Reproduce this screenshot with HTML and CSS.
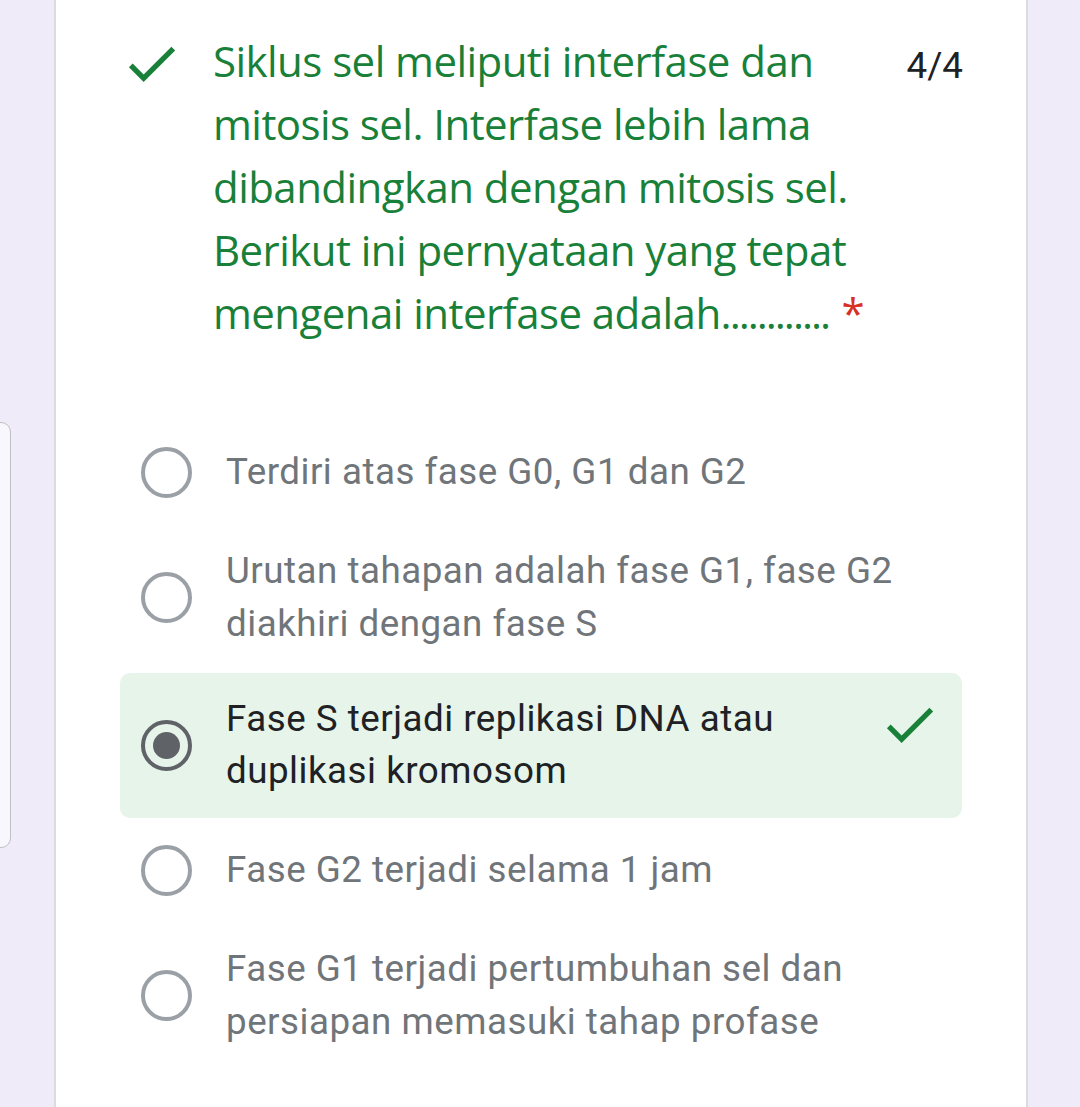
FILE: index.html
```html
<!DOCTYPE html>
<html lang="id">
<head>
<meta charset="utf-8">
<title>Kuis</title>
<link rel="stylesheet" href="styles.css">
</head>
<body>
<div class="side-tab"></div>
<main class="card">
  <div class="q-header">
    <svg class="q-icon" viewBox="0 0 24 24" aria-hidden="true"><path d="M9 16.17L4.83 12l-1.42 1.41L9 19 21 7l-1.41-1.41L9 16.17z"/></svg>
    <div class="q-title">Siklus sel meliputi interfase dan<br>mitosis sel. Interfase lebih lama<br>dibandingkan dengan mitosis sel.<br>Berikut ini pernyataan yang tepat<br>mengenai interfase adalah<span class="dots">............</span><span class="req">*</span></div>
    <div class="q-score">4/4</div>
  </div>
  <div class="options">
    <div class="option">
      <span class="radio"></span>
      <span class="opt-text">Terdiri atas fase G0, G1 dan G2</span>
    </div>
    <div class="option">
      <span class="radio"></span>
      <span class="opt-text">Urutan tahapan adalah fase G1, fase G2 diakhiri dengan fase S</span>
    </div>
    <div class="option option-correct">
      <span class="radio radio-checked"></span>
      <span class="opt-text">Fase S terjadi replikasi DNA atau duplikasi kromosom</span>
      <svg class="opt-check" viewBox="0 0 24 24" aria-hidden="true"><path d="M9 16.17L4.83 12l-1.42 1.41L9 19 21 7l-1.41-1.41L9 16.17z"/></svg>
    </div>
    <div class="option">
      <span class="radio"></span>
      <span class="opt-text">Fase G2 terjadi selama 1 jam</span>
    </div>
    <div class="option">
      <span class="radio"></span>
      <span class="opt-text">Fase G1 terjadi pertumbuhan sel dan persiapan memasuki tahap profase</span>
    </div>
  </div>
</main>
</body>
</html>
```
FILE: styles.css
```css
html, body {
  margin: 0;
  padding: 0;
}
body {
  background: #f0ebf8;
  width: 1080px;
  height: 1107px;
  overflow: hidden;
  position: relative;
}
.side-tab {
  position: absolute;
  left: -30px;
  top: 422px;
  width: 39px;
  height: 424px;
  border: 1.5px solid #bfbfc4;
  border-radius: 10px;
  background: #f8f7fd;
}
.card {
  margin-left: 54px;
  width: 974px;
  min-height: 1107px;
  box-sizing: border-box;
  background: #fff;
  border-left: 2px solid #dadce0;
  border-right: 2px solid #dadce0;
  padding: 29px 64px 0 64px;
}
.q-header {
  display: flex;
  align-items: flex-start;
}
.q-icon {
  width: 63px;
  height: 63px;
  flex: none;
  margin-top: 3px;
  margin-right: 30px;
  fill: #188038;
}
.q-title {
  flex: 1;
  font-family: "Open Sans", sans-serif;
  font-size: 42px;
  line-height: 63px;
  letter-spacing: -0.55px;
  color: #188038;
  white-space: nowrap;
}
.dots {
  letter-spacing: -2px;
}
.req {
  color: #d93025;
  padding-left: 0.3em;
}
.q-score {
  flex: none;
  margin-top: 5px;
  font-family: Roboto, sans-serif;
  font-size: 36.75px;
  line-height: 63px;
  color: #202124;
  margin-right: -1px;
}
.options {
  margin-top: 78px;
  display: flex;
  flex-direction: column;
  gap: 2.5px;
}
.option {
  display: flex;
  align-items: center;
  min-height: 100.5px;
  box-sizing: border-box;
  padding: 20px 21px;
  border-radius: 10px;
}
.option-correct {
  background: #e6f4ea;
}
.radio {
  flex: none;
  width: 51px;
  height: 51px;
  box-sizing: border-box;
  border: 4.5px solid #9aa0a6;
  border-radius: 50%;
  margin-right: 34px;
  display: flex;
  align-items: center;
  justify-content: center;
}
.radio-checked {
  border-color: #5f6368;
}
.radio-checked::after {
  content: "";
  width: 27px;
  height: 27px;
  border-radius: 50%;
  background: #5f6368;
}
.opt-text {
  flex: 1;
  font-family: Roboto, sans-serif;
  font-size: 36.75px;
  line-height: 52.5px;
  letter-spacing: 0.5px;
  color: #70757a;
}
.option-correct .opt-text {
  color: #202124;
}
.opt-check {
  flex: none;
  align-self: flex-start;
  width: 63px;
  height: 63px;
  fill: #188038;
  margin-left: 12px;
}
```
